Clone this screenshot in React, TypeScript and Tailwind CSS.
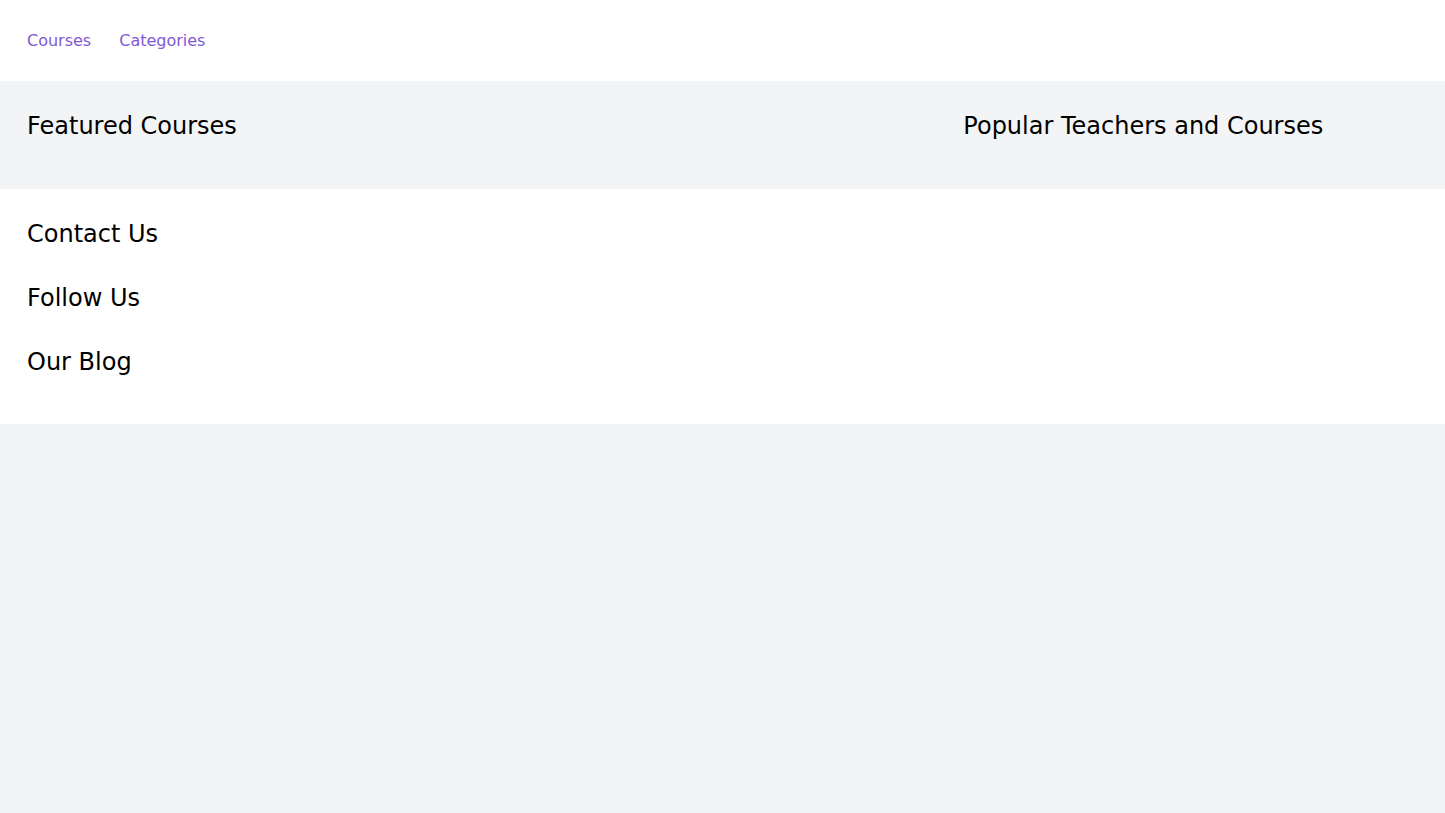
export default function App() {
  return (
    <div className="min-h-screen bg-[#f3f4f6] font-['DejaVu_Sans',sans-serif] text-black">
      <nav className="flex h-[81px] items-center gap-7 bg-white px-[27px]">
        <a href="#" className="text-base text-[#805ad5]">Courses</a>
        <a href="#" className="text-base text-[#805ad5]">Categories</a>
      </nav>

      <section className="flex bg-[#f3f4f6] pt-[29px] pb-[47px]">
        <div className="w-2/3 px-[27px]">
          <h2 className="text-2xl">Featured Courses</h2>
        </div>
        <div className="w-1/3 pr-6">
          <h2 className="text-2xl">Popular Teachers and Courses</h2>
        </div>
      </section>

      <footer className="flex flex-col gap-8 bg-white px-[27px] pt-[29px] pb-[46px]">
        <h2 className="text-2xl">Contact Us</h2>
        <h2 className="text-2xl">Follow Us</h2>
        <h2 className="text-2xl">Our Blog</h2>
      </footer>
    </div>
  )
}
